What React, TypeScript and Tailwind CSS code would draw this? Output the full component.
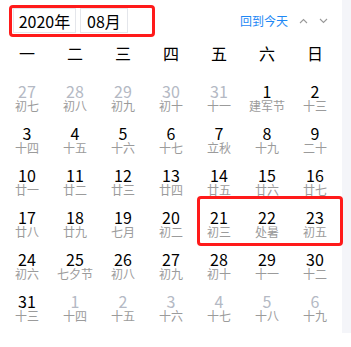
import React from 'react';

type Day = { d: number; l: string; other?: boolean };

const rows: Day[][] = [
  [
    { d: 27, l: '初七', other: true },
    { d: 28, l: '初八', other: true },
    { d: 29, l: '初九', other: true },
    { d: 30, l: '初十', other: true },
    { d: 31, l: '十一', other: true },
    { d: 1, l: '建军节' },
    { d: 2, l: '十三' },
  ],
  [
    { d: 3, l: '十四' },
    { d: 4, l: '十五' },
    { d: 5, l: '十六' },
    { d: 6, l: '十七' },
    { d: 7, l: '立秋' },
    { d: 8, l: '十九' },
    { d: 9, l: '二十' },
  ],
  [
    { d: 10, l: '廿一' },
    { d: 11, l: '廿二' },
    { d: 12, l: '廿三' },
    { d: 13, l: '廿四' },
    { d: 14, l: '廿五' },
    { d: 15, l: '廿六' },
    { d: 16, l: '廿七' },
  ],
  [
    { d: 17, l: '廿八' },
    { d: 18, l: '廿九' },
    { d: 19, l: '七月' },
    { d: 20, l: '初二' },
    { d: 21, l: '初三' },
    { d: 22, l: '处暑' },
    { d: 23, l: '初五' },
  ],
  [
    { d: 24, l: '初六' },
    { d: 25, l: '七夕节' },
    { d: 26, l: '初八' },
    { d: 27, l: '初九' },
    { d: 28, l: '初十' },
    { d: 29, l: '十一' },
    { d: 30, l: '十二' },
  ],
  [
    { d: 31, l: '十三' },
    { d: 1, l: '十四', other: true },
    { d: 2, l: '十五', other: true },
    { d: 3, l: '十六', other: true },
    { d: 4, l: '十七', other: true },
    { d: 5, l: '十八', other: true },
    { d: 6, l: '十九', other: true },
  ],
];

const weekdays = ['一', '二', '三', '四', '五', '六', '日'];

export default function App() {
  return (
    <div
      className="relative flex w-[351px] h-[347px] bg-white"
      style={{ fontFamily: '"Noto Sans CJK SC", "Noto Sans", sans-serif' }}
    >
      <div className="w-[342px] pl-[3px] pr-[3px]">
        {/* header */}
        <div className="flex items-start justify-between pt-[5px] h-[37px]">
          <div className="ml-[6px] flex gap-[4px] w-[146px] h-[32px] border-[3px] border-[#ff1a1a] rounded-[4px] pl-[1px]">
            <div className="w-[63px] h-[25px] border border-[#e4e6eb] flex items-center justify-center text-[16px] leading-none text-black">
              2020年
            </div>
            <div className="w-[48px] h-[25px] border border-[#e4e6eb] flex items-center justify-center text-[16px] leading-none text-black">
              08月
            </div>
          </div>
          <div className="flex items-center h-[32px] mr-[11px] gap-[11px]">
            <span className="text-[12px] leading-none text-[#1e88f5]">回到今天</span>
            <svg width="9" height="6" viewBox="0 0 9 6">
              <path d="M1 5 L4.5 1.5 L8 5" fill="none" stroke="#999" strokeWidth="1.1" />
            </svg>
            <svg width="9" height="6" viewBox="0 0 9 6">
              <path d="M1 1 L4.5 4.5 L8 1" fill="none" stroke="#999" strokeWidth="1.1" />
            </svg>
          </div>
        </div>

        {/* weekdays */}
        <div className="grid grid-cols-7 h-[41px] pt-[8px]">
          {weekdays.map((w) => (
            <div key={w} className="text-center text-[16px] leading-[16px] text-black">
              {w}
            </div>
          ))}
        </div>

        {/* days */}
        {rows.map((row, i) => (
          <div key={i} className="grid grid-cols-7 h-[42px]">
            {row.map((c, j) => (
              <div key={j} className="flex flex-col items-center pt-[5px]">
                <span
                  className={
                    c.other
                      ? 'text-[16px] leading-[16px] text-[#b4b9c4]'
                      : 'text-[16px] leading-[16px] text-black'
                  }
                >
                  {c.d}
                </span>
                <span className="text-[12px] leading-[13px] text-[#9b9b9b]">{c.l}</span>
              </div>
            ))}
          </div>
        ))}
      </div>
      <div className="w-[9px] h-[333px] bg-[#f4f5f9]" />

      {/* highlight annotation */}
      <div className="absolute left-[197px] top-[196px] w-[146px] h-[50px] border-[3px] border-[#ff1a1a] rounded-[4px]" />
    </div>
  );
}
